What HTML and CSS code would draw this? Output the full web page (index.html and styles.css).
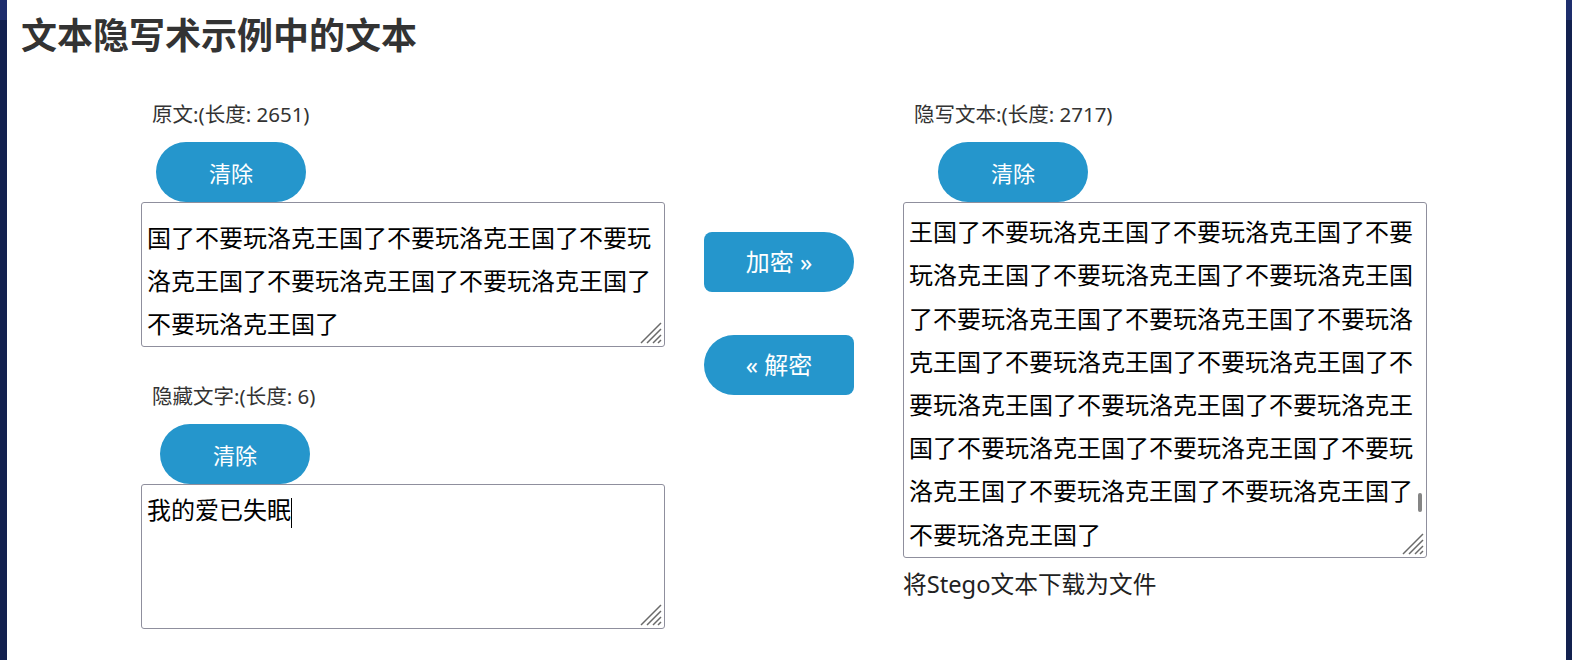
FILE: index.html
```html
<!DOCTYPE html>
<html lang="zh-CN">
<head>
<meta charset="utf-8">
<title>文本隐写术示例中的文本</title>
<link rel="stylesheet" href="styles.css">
</head>
<body>
<div class="page">
  <h1 class="title">文本隐写术示例中的文本</h1>
  <div class="stego">
    <div class="col col-left">
      <label class="field-label" for="plain">原文:(长度: 2651)</label>
      <button class="btn-clear" type="button">清除</button>
      <div class="box-wrap">
        <textarea id="plain" class="box box-plain">国了不要玩洛克王国了不要玩洛克王国了不要玩洛克王国了不要玩洛克王国了不要玩洛克王国了不要玩洛克王国了</textarea>
        <svg class="grip" viewBox="0 0 22 22" width="22" height="22" aria-hidden="true"><path d="M1 21 L21 1 M7 21 L21 7 M13 21 L21 13 M18 21 L21 18"/></svg>
      </div>
      <label class="field-label field-label-2" for="hidden">隐藏文字:(长度: 6)</label>
      <button class="btn-clear btn-clear-2" type="button">清除</button>
      <div class="box-wrap">
        <textarea id="hidden" class="box box-hidden">我的爱已失眠</textarea>
        <span class="caret"></span>
        <svg class="grip" viewBox="0 0 22 22" width="22" height="22" aria-hidden="true"><path d="M1 21 L21 1 M7 21 L21 7 M13 21 L21 13 M18 21 L21 18"/></svg>
      </div>
    </div>
    <div class="col col-mid">
      <button class="btn-action btn-encrypt" type="button">加密 »</button>
      <button class="btn-action btn-decrypt" type="button">« 解密</button>
    </div>
    <div class="col col-right">
      <label class="field-label" for="stego">隐写文本:(长度: 2717)</label>
      <button class="btn-clear btn-clear-3" type="button">清除</button>
      <div class="box-wrap">
        <textarea id="stego" class="box box-stego scroll-end">玩洛克王国了不要玩洛克王国了不要玩洛克王国王国了不要玩洛克王国了不要玩洛克王国了不要玩洛克王国了不要玩洛克王国了不要玩洛克王国了不要玩洛克王国了不要玩洛克王国了不要玩洛克王国了不要玩洛克王国了不要玩洛克王国了不要玩洛克王国了不要玩洛克王国了不要玩洛克王国了不要玩洛克王国了不要玩洛克王国了不要玩洛克王国了不要玩洛克王国了不要玩洛克王国了不要玩洛克王国了</textarea>
        <span class="thumb"></span>
        <svg class="grip" viewBox="0 0 22 22" width="22" height="22" aria-hidden="true"><path d="M1 21 L21 1 M7 21 L21 7 M13 21 L21 13 M18 21 L21 18"/></svg>
      </div>
      <a class="download" href="#">将Stego文本下载为文件</a>
    </div>
  </div>
</div>
<script src="script.js"></script>
</body>
</html>
```

FILE: styles.css
```css
html, body {
  margin: 0;
  padding: 0;
}
body {
  background: linear-gradient(#1e2e6d 0, #1e2e6d 20px, #13214f 20px, #13214f 100%);
  min-height: 660px;
  font-family: "Noto Sans", "Noto Sans CJK SC", sans-serif;
  color: #333;
}
.page {
  margin: 0 6px 0 7px;
  background: #fff;
  min-height: 660px;
  overflow: hidden;
}
.title {
  margin: 11px 0 0 14px;
  font-family: "Noto Sans CJK SC", sans-serif;
  font-size: 36px;
  line-height: 44px;
  font-weight: 700;
  color: #333;
}
.stego {
  display: flex;
  align-items: flex-start;
  margin-top: 43px;
  padding-left: 134px;
}
.col {
  display: flex;
  flex-direction: column;
  align-items: flex-start;
  flex-shrink: 0;
}
.col-left {
  width: 524px;
}
.col-mid {
  width: 150px;
  margin-left: 39px;
}
.col-right {
  width: 524px;
  margin-left: 49px;
}
.field-label {
  display: block;
  margin: 2px 0 0 11px;
  font-size: 20.5px;
  line-height: 28px;
  height: 28px;
  color: #333;
}
.field-label-2 {
  margin-top: 35px;
}
.btn-clear {
  margin: 14px 0 0 15px;
  width: 150px;
  height: 60px;
  border: none;
  border-radius: 30px;
  background: #2596cc;
  color: #fff;
  font-family: "Noto Sans CJK SC", sans-serif;
  font-size: 22px;
  line-height: 60px;
  padding: 0;
  cursor: pointer;
}
.btn-clear-2 {
  margin: 14px 0 0 19px;
}
.btn-clear-3 {
  margin-left: 35px;
}
.box-wrap {
  position: relative;
}
.box {
  display: block;
  box-sizing: border-box;
  margin: 0;
  width: 524px;
  padding: 2px 5px;
  border: 1px solid #8f8f9d;
  border-radius: 3px;
  font-family: "Noto Sans CJK SC", sans-serif;
  font-size: 24px;
  line-height: 1.8;
  color: #000;
  background: #fff;
  overflow: hidden;
  resize: none;
}
.box:focus {
  outline: none;
}
.box-plain {
  height: 145px;
  padding-top: 12px;
  padding-bottom: 0;
}
.box-hidden {
  height: 145px;
}
.box-stego {
  height: 356px;
}
.grip {
  position: absolute;
  right: 3px;
  bottom: 3px;
  fill: none;
  stroke: #6a6a6a;
  stroke-width: 1.5;
  stroke-linecap: butt;
}
.thumb {
  position: absolute;
  top: 291px;
  right: 5px;
  width: 4px;
  height: 19px;
  border-radius: 2px;
  background: #858585;
}
.caret {
  position: absolute;
  left: 150px;
  top: 14px;
  width: 1px;
  height: 30px;
  background: #000;
}
.download {
  display: block;
  margin-top: 10px;
  font-family: "Noto Sans", "Noto Sans CJK SC", sans-serif;
  font-size: 23.7px;
  line-height: 32px;
  color: #222;
  text-decoration: none;
}
.btn-action {
  width: 150px;
  height: 60px;
  border: none;
  background: #2596cc;
  color: #fff;
  font-family: "Noto Sans", "Noto Sans CJK SC", sans-serif;
  font-size: 24px;
  line-height: 60px;
  padding: 0;
  cursor: pointer;
}
.btn-encrypt {
  margin-top: 134px;
  border-radius: 8px 30px 30px 8px;
}
.btn-decrypt {
  margin-top: 43px;
  border-radius: 30px 8px 8px 30px;
}
```

FILE: script.js
```js
document.querySelectorAll('.scroll-end').forEach(function (t) {
  t.scrollTop = t.scrollHeight;
});
var hidden = document.getElementById('hidden');
hidden.focus();
hidden.setSelectionRange(hidden.value.length, hidden.value.length);
```
